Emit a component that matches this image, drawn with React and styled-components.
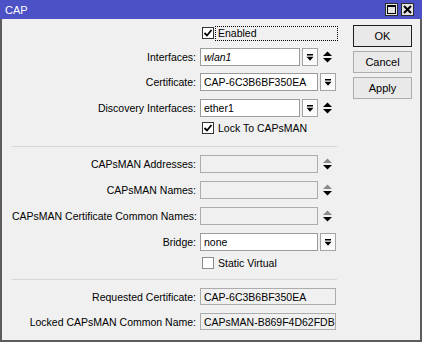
import React from 'react'
import styled, { createGlobalStyle } from 'styled-components'

const GlobalStyle = createGlobalStyle`
  body {
    margin: 0;
    background: #f0f0f0;
    font-family: "Liberation Sans", Arial, sans-serif;
  }
`

const Window = styled.div`
  width: 422px;
  height: 342px;
  display: flex;
  flex-direction: column;
  box-sizing: border-box;
  font-size: 10.5px;
  color: #000;
`

const TitleBar = styled.div`
  height: 19px;
  background: #4c51c6;
  display: flex;
  align-items: center;
  padding: 0 8px 0 5px;
  flex-shrink: 0;
`

const TitleText = styled.div`
  color: #fff;
  font-size: 11px;
  flex: 1;
  padding-top: 1px;
`

const TitleButtons = styled.div`
  display: flex;
  gap: 3px;
`

const TitleButton = styled.div`
  width: 13px;
  height: 13px;
  box-sizing: border-box;
  background: #e4e4e4;
  border: 1px solid #2a2a2a;
  display: flex;
  align-items: center;
  justify-content: center;
`

const Body = styled.div`
  flex: 1;
  display: flex;
  gap: 16px;
  background: #f0f0f0;
  border: 2px solid #5c5c5c;
  border-top: none;
  padding: 6px 8px 0 10px;
`

const Form = styled.div`
  width: 325px;
  display: flex;
  flex-direction: column;
`

const Row = styled.div`
  display: grid;
  grid-template-columns: 184px 136px;
  column-gap: 4px;
  height: ${p => p.$h || 18}px;
  margin-top: ${p => (p.$top === undefined ? 8 : p.$top)}px;
  align-items: center;
`

const Label = styled.div`
  text-align: right;
  white-space: nowrap;
`

const Field = styled.div`
  display: flex;
  align-items: stretch;
  height: 100%;
`

const Input = styled.div`
  flex: 1;
  box-sizing: border-box;
  background: ${p => (p.$disabled ? '#f0f0f0' : '#fff')};
  border: 1px solid ${p => (p.$disabled ? '#acacac' : '#9c9c9c')};
  padding: 0 3px;
  display: flex;
  align-items: center;
  font-style: ${p => (p.$italic ? 'italic' : 'normal')};
  white-space: nowrap;
  overflow: hidden;
`

const DropButton = styled.div`
  width: 16px;
  margin-left: 2px;
  box-sizing: border-box;
  background: #fbfbfb;
  border: 1px solid #a4a4a4;
  display: flex;
  align-items: center;
  justify-content: center;
`

const SpinBox = styled.div`
  width: 18px;
  display: flex;
  align-items: center;
  justify-content: center;
`

const CheckCell = styled.div`
  display: flex;
  align-items: center;
  padding-left: 2px;
  height: 100%;
`

const Box = styled.div`
  width: 12px;
  height: 12px;
  box-sizing: border-box;
  background: #fff;
  border: 1px solid ${p => (p.$checked ? '#333' : '#8c8c8c')};
  display: flex;
  align-items: center;
  justify-content: center;
  flex-shrink: 0;
`

const CheckText = styled.div`
  margin-left: 1px;
  padding-left: 2px;
  height: 15px;
  display: flex;
  align-items: center;
  box-sizing: border-box;
  flex: ${p => (p.$focused ? 1 : 'none')};
  margin-right: ${p => (p.$focused ? -2 : 0)}px;
  border: 1px dotted ${p => (p.$focused ? '#000' : 'transparent')};
`

const Separator = styled.div`
  height: 1px;
  background: #d6d6d6;
  margin-top: ${p => p.$top}px;
`

const Buttons = styled.div`
  width: 59px;
  display: flex;
  flex-direction: column;
  gap: 4px;
`

const Button = styled.div`
  height: 22px;
  box-sizing: border-box;
  background: #e9e9e9;
  border: 1px solid ${p => (p.$primary ? '#1e1e1e' : '#adadad')};
  display: flex;
  align-items: center;
  justify-content: center;
  font-size: 11px;
`

const DropIcon = () => (
  <svg width="8" height="9" viewBox="0 0 8 9">
    <rect x="1" y="1" width="6" height="1.5" fill="#000" />
    <polygon points="0.5,3.8 7.5,3.8 4,7.8" fill="#000" />
  </svg>
)

const SpinIcon = ({ disabled }) => (
  <svg width="9" height="12" viewBox="0 0 9 12">
    <polygon points="0,5 9,5 4.5,0.5" fill={disabled ? '#8a8a8a' : '#000'} />
    <polygon points="0,7 9,7 4.5,11.5" fill="#000" />
  </svg>
)

const Tick = () => (
  <svg width="10" height="10" viewBox="0 0 10 10">
    <path d="M1.5 5 L4 7.5 L8.5 2" stroke="#000" strokeWidth="1.8" fill="none" />
  </svg>
)

const Check = ({ checked, focused, children, top }) => (
  <Row $h={16} $top={top}>
    <span />
    <CheckCell>
      <Box $checked={checked}>{checked && <Tick />}</Box>
      <CheckText $focused={focused}>{children}</CheckText>
    </CheckCell>
  </Row>
)

const FieldRow = ({ label, value, italic, disabled, drop, spin, h, top }) => (
  <Row $h={h} $top={top}>
    <Label>{label}</Label>
    <Field>
      <Input $disabled={disabled} $italic={italic}>{value}</Input>
      {drop && <DropButton><DropIcon /></DropButton>}
      {spin && <SpinBox><SpinIcon disabled={disabled} /></SpinBox>}
    </Field>
  </Row>
)

export default function App() {
  return (
    <>
      <GlobalStyle />
      <Window>
        <TitleBar>
          <TitleText>CAP</TitleText>
          <TitleButtons>
            <TitleButton>
              <svg width="9" height="9" viewBox="0 0 9 9">
                <rect x="0.5" y="0.5" width="8" height="8" fill="none" stroke="#000" />
                <rect x="0" y="0" width="9" height="2" fill="#000" />
              </svg>
            </TitleButton>
            <TitleButton>
              <svg width="9" height="9" viewBox="0 0 9 9">
                <path d="M1 1 L8 8 M8 1 L1 8" stroke="#000" strokeWidth="2" />
              </svg>
            </TitleButton>
          </TitleButtons>
        </TitleBar>
        <Body>
          <Form>
            <Check checked focused top={0}>Enabled</Check>
            <FieldRow label="Interfaces:" value="wlan1" italic drop spin top={7} />
            <FieldRow label="Certificate:" value="CAP-6C3B6BF350EA" drop top={7} />
            <FieldRow label="Discovery Interfaces:" value="ether1" drop spin top={8} />
            <Check checked top={3}>Lock To CAPsMAN</Check>
            <Separator $top={10} />
            <FieldRow label="CAPsMAN Addresses:" disabled spin />
            <FieldRow label="CAPsMAN Names:" disabled spin />
            <FieldRow label="CAPsMAN Certificate Common Names:" disabled spin />
            <FieldRow label="Bridge:" value="none" drop />
            <Check top={4}>Static Virtual</Check>
            <Separator $top={8} />
            <FieldRow label="Requested Certificate:" value="CAP-6C3B6BF350EA" disabled h={17} />
            <FieldRow label="Locked CAPsMAN Common Name:" value="CAPsMAN-B869F4D62FDB" disabled h={17} />
          </Form>
          <Buttons>
            <Button $primary>OK</Button>
            <Button>Cancel</Button>
            <Button>Apply</Button>
          </Buttons>
        </Body>
      </Window>
    </>
  )
}
